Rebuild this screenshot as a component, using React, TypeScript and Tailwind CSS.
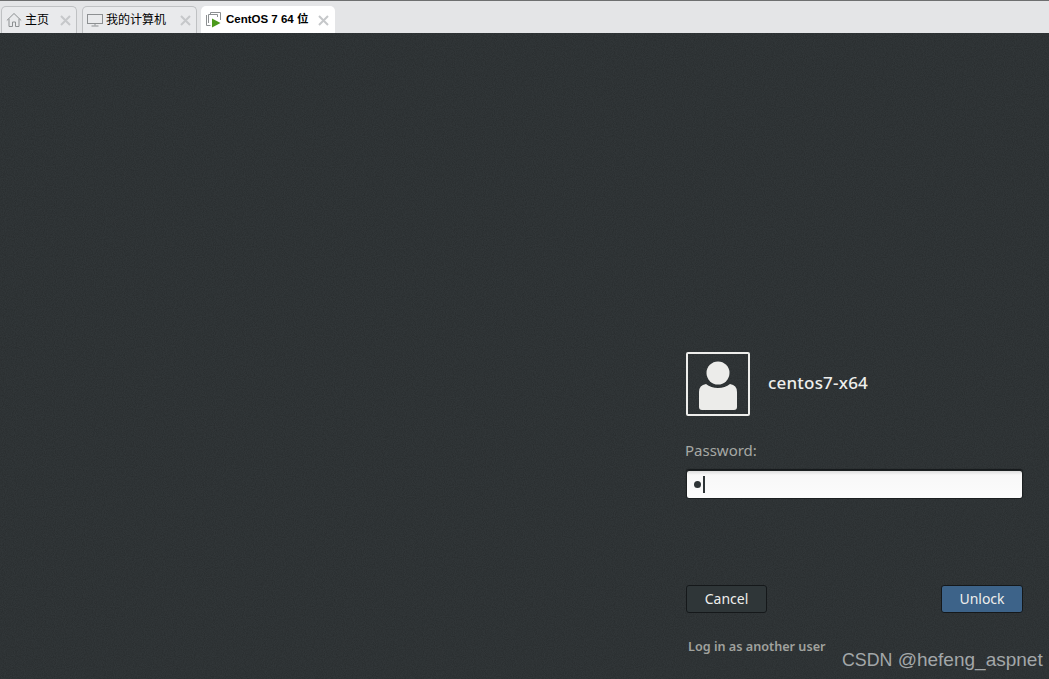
import React from "react";

const cjk = "font-['Liberation_Sans','Noto_Sans_CJK_SC',sans-serif]";

function Close() {
  return (
    <svg width="11" height="11" viewBox="0 0 11 11" className="shrink-0">
      <path d="M1 1 L10 10 M10 1 L1 10" stroke="#c6c8ca" strokeWidth="2" />
    </svg>
  );
}

function Tab({ icon, label, active, w, bold }: { icon: React.ReactNode; label: string; active?: boolean; w: string; bold?: boolean }) {
  return (
    <div className={`${w} ${active ? "bg-white border-transparent" : "bg-[#e9eaec] border-[#bfc1c3]"} h-[27px] rounded-t-[5px] border border-b-0 flex items-center pl-[4px] pr-[5px] shrink-0`}>
      {icon}
      <span className={`whitespace-nowrap text-black ${bold ? "ml-[4px] font-bold text-[11.5px]" : "ml-[3px] text-[12px]"} ${cjk}`}>{label}</span>
      <span className="ml-auto"><Close /></span>
    </div>
  );
}

const HomeIcon = (
  <svg width="16" height="16" viewBox="0 0 16 16" fill="none" stroke="#8d9092" strokeWidth="1" className="shrink-0">
    <path d="M0.8 8.5 L8 1.5 L15.2 8.5" />
    <path d="M3 6.8 V14.5 H6.5 V10 H9.5 V14.5 H13 V6.8" />
  </svg>
);
const MonitorIcon = (
  <svg width="16" height="14" viewBox="0 0 16 14" fill="none" stroke="#8d9092" strokeWidth="1" className="shrink-0">
    <rect x="0.5" y="1.5" width="15" height="9" />
    <path d="M8 10.5 V12.5 M4.5 13 H11.5" />
  </svg>
);
const VmIcon = (
  <svg width="16" height="16" viewBox="0 0 16 16" fill="none" className="shrink-0">
    <path d="M4.5 2.5 V0.5 H14.5 V8" stroke="#8d9092" />
    <path d="M2.5 5 V2.5 H11.5 V5" stroke="#8d9092" />
    <path d="M0.5 3 V13.5 H4.5 M2.5 3 V11" stroke="#8d9092" />
    <path d="M6 6.5 L14.5 11 L6 15.5 Z" fill="#4c9a1c" />
  </svg>
);

export default function App() {
  return (
    <div className="w-[1049px] h-[679px] overflow-hidden flex flex-col relative bg-[#313638]">
      <div className="h-[33px] shrink-0 bg-[#e4e5e7] border-t border-t-[#6e6f70] flex items-end pl-px">
        <Tab w="w-[76px]" icon={HomeIcon} label="主页" />
        <div className="w-[5px] shrink-0"></div>
        <Tab w="w-[115px]" icon={MonitorIcon} label="我的计算机" />
        <div className="w-[4px] shrink-0"></div>
        <Tab w="w-[134px]" active bold icon={VmIcon} label="CentOS 7 64 位" />
      </div>
      <div className="flex-1 relative">
        <svg className="absolute inset-0 w-full h-full" aria-hidden="true">
          <filter id="grain">
            <feTurbulence type="fractalNoise" baseFrequency="0.9" numOctaves="2" seed="4" />
            <feColorMatrix type="matrix" values="0 0 0 0 0  0 0 0 0 0  0 0 0 0 0  1.1 0 0 0 -0.35" />
          </filter>
          <rect width="100%" height="100%" fill="#000" filter="url(#grain)" opacity="0.25" />
        </svg>
        <div className="relative h-full flex flex-col items-start pl-[686px] pr-[26px] pt-[319px] font-['Noto_Sans',sans-serif]">
          <div className="flex items-center">
            <div className="w-[64px] h-[64px] border-2 border-[#eeeeec] rounded-[2px] flex items-end justify-center">
              <svg width="40" height="54" viewBox="0 0 40 54" className="mb-[2px]">
                <circle cx="20" cy="15" r="11.5" fill="#ececea" />
                <path d="M1 34 Q1 27 8 26 Q13 30 20 30 Q27 30 32 26 Q39 27 39 34 V49 Q39 52 36 52 H4 Q1 52 1 49 Z" fill="#ececea" />
              </svg>
            </div>
            <span className="ml-[18px] text-[17px] font-medium tracking-[0.2px] text-[#eeeeec] mb-[2px]">centos7-x64</span>
          </div>
          <div className="mt-[23px] -ml-px text-[15px] leading-[22px] text-[#a6a8a4]">Password:</div>
          <div className="mt-[9px] w-full h-[29px] rounded-[3px] border border-[#1c2021] shadow-[0_-1px_1px_#15181a] bg-[linear-gradient(#dcdcdc,#f8f8f8_4px,#fcfcfc)] flex items-center pl-[7px]">
            <span className="w-[7px] h-[7px] rounded-full bg-[#2e3436]"></span>
            <span className="ml-[2px] w-[2px] h-[17px] bg-[#2e3436]"></span>
          </div>
          <div className="mt-[86px] w-full flex justify-between">
            <div className="w-[81px] h-[28px] rounded-[3px] border border-[#15181a] bg-[#2f3638] flex items-center justify-center text-[14px] leading-[24px] pb-px text-[#eeeeec]">Cancel</div>
            <div className="w-[82px] h-[28px] rounded-[3px] border border-[#15181a] bg-[#3d6389] flex items-center justify-center text-[14px] leading-[24px] pb-px text-[#eeeeec]">Unlock</div>
          </div>
          <div className="mt-[24px] ml-[2px] text-[12.65px] leading-[18px] font-semibold text-[#a0a29e]">Log in as another user</div>
        </div>
      </div>
      <div className="absolute left-[842px] top-[648px] text-[19px] leading-[24px] whitespace-nowrap text-[#a3a7a9] font-['Liberation_Sans',sans-serif]"><span className="text-[17.8px]">CSDN</span> @hefeng_aspnet</div>
    </div>
  );
}
